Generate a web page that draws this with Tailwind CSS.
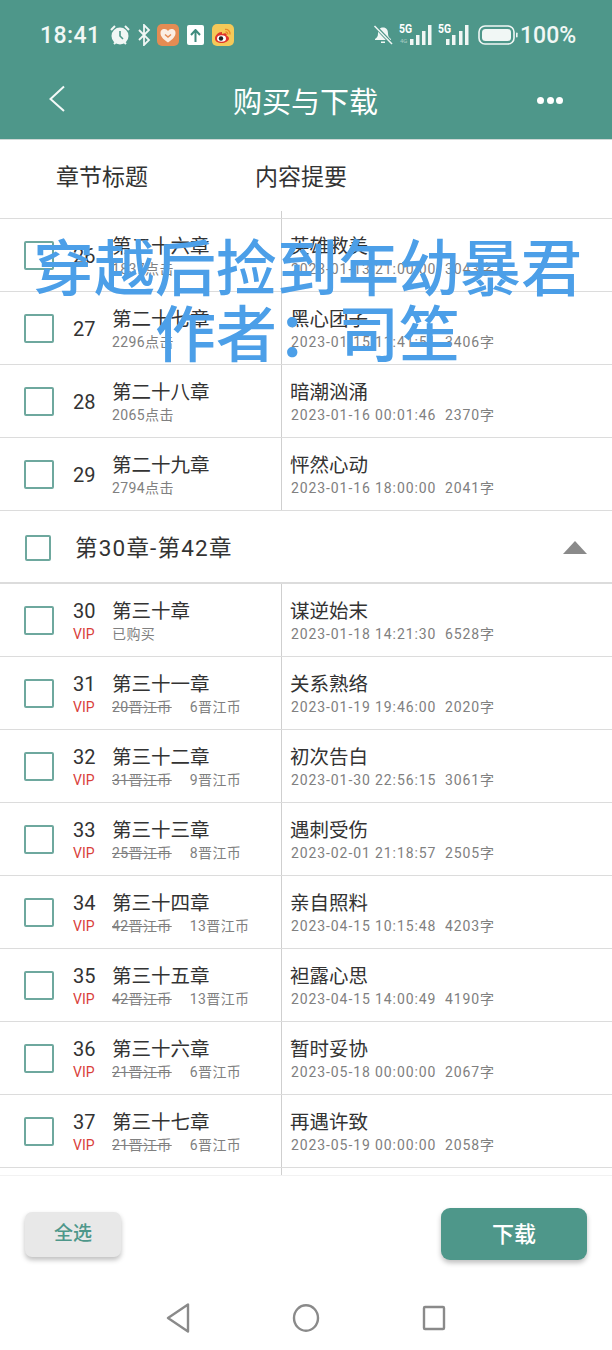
<!DOCTYPE html>
<html lang="zh-CN"><head><meta charset="utf-8"><script src="https://cdn.jsdelivr.net/npm/@tailwindcss/browser@4"></script></head>
<body class="bg-white">
<div class="relative w-[612px] h-[1350px] overflow-hidden bg-white flex flex-col font-['Roboto','Noto_Sans_CJK_SC',sans-serif] text-[#333]">

<header class="h-[140px] shrink-0 bg-[#4e978a] border-b border-[#cfd8d6] text-white flex flex-col">
  <div class="h-[70px] flex items-center justify-between pl-[40px] pr-[37px]">
    <div class="flex items-center">
      <span class="text-[23px] font-medium tracking-[0.4px] w-[69px] mt-[2px] text-[#f1f7f5]">18:41</span>
      <svg class="w-[22px] h-[22px]" viewBox="0 0 22 22"><circle cx="11" cy="12" r="8.5" fill="#f1f7f5"/><path d="M2 6l4-4M20 6l-4-4M5 20l2-2M17 20l-2-2" stroke="#f1f7f5" stroke-width="2" fill="none"/><path d="M11 7v5l3 3" stroke="#4e978a" stroke-width="1.6" fill="none"/></svg>
      <svg class="w-[14px] h-[22px] ml-[6px]" viewBox="0 0 14 22"><path d="M2 6l10 10-5 5V1l5 5L2 16" stroke="#f1f7f5" stroke-width="1.8" fill="none"/></svg>
      <div class="w-[22px] h-[22px] ml-[6px] rounded-[5px] bg-[#e58c53] flex items-center justify-center"><svg class="w-[16px] h-[15px]" viewBox="0 0 16 15"><path d="M8 14.5C3 11 .5 8.500 .5 5A4 4 0 0 1 8 3a4 4 0 0 1 7.500 2c0 3.500-2.500 6-7.500 9.500z" fill="#fbeee2"/><path d="M5 6.500l3 2.500 3-2.500" stroke="#e58c53" stroke-width="1.500" fill="none"/></svg></div>
      <div class="w-[17px] h-[20px] ml-[8px] rounded-[2px] bg-white flex items-center justify-center"><svg class="w-[11px] h-[13px]" viewBox="0 0 11 13"><path d="M5.500 13V2M1 6l4.500-5L10 6" stroke="#3f8b7e" stroke-width="2" fill="none"/></svg></div>
      <div class="w-[22px] h-[22px] ml-[8px] rounded-[5px] bg-[#f6c958] flex items-center justify-center"><svg class="w-[19px] h-[17px]" viewBox="0 0 19 17"><path d="M8 5C4 5 1 8.500 1 11.500 1 14.500 4 16 7.500 16s7.500-2 7.500-4.500c0-2-2-2.500-2.500-2.700.5-1.500 0-3-2.500-2.300-1 .3-1.500.5-2 .5z" fill="#e0352b"/><ellipse cx="7.500" cy="11.500" rx="4.500" ry="3.300" fill="#fff"/><circle cx="7" cy="11.500" r="2.200" fill="#222"/><path d="M11 2.500c3-.5 5.500 2 5 5M11.500 5c1.500-.2 2.500 1 2.300 2.500" stroke="#e8872a" stroke-width="1.300" fill="none"/></svg></div>
    </div>
    <div class="flex items-center">
      <svg class="w-[20px] h-[20px]" viewBox="0 0 20 20"><path d="M10 2.500c-3.500 0-5 2.500-5 6 0 3-1 4-3 5.500v1h16v-1c-2-1.500-3-2.500-3-5.500 0-3.500-1.500-6-5-6z" fill="#f1f7f5"/><path d="M8 16.500h4v1.500H8z" fill="#f1f7f5"/><path d="M2 1l17 18" stroke="#4e978a" stroke-width="3.500"/><path d="M1.500 1l17.500 18" stroke="#f1f7f5" stroke-width="1.500"/></svg>
      <div class="relative w-[34px] h-[22px] ml-[6px]">
        <span class="absolute left-0 top-[-2px] text-[13px] font-bold leading-[14px] scale-x-[0.8] origin-left">5G</span>
        <span class="absolute left-[1px] top-[13px] text-[6px] leading-[8px] text-white/50">4G</span>
        <svg class="absolute left-0 top-0 w-[34px] h-[22px]" viewBox="0 0 34 22"><path d="M11 15h3.500v6H11zM17 11h3.500v10H17zM23 7h3.500v14H23zM29 1h3.500v20H29z" fill="#f1f7f5"/></svg>
      </div>
      <div class="relative w-[32px] h-[22px] ml-[5px]">
        <span class="absolute left-0 top-[-2px] text-[13px] font-bold leading-[14px] scale-x-[0.8] origin-left">5G</span>
        <svg class="absolute left-0 top-0 w-[32px] h-[22px]" viewBox="0 0 32 22"><path d="M8 15h3.500v6H8zM14 11h3.500v10H14zM21 7h3.500v14H21zM27 1h3.500v20H27z" fill="#f1f7f5"/></svg>
      </div>
      <svg class="w-[40px] h-[20px] ml-[8px]" viewBox="0 0 40 20"><rect x="1" y="1" width="35" height="18" rx="6" fill="none" stroke="#f1f7f5" stroke-width="1.600"/><rect x="4" y="4" width="29" height="12" rx="3.500" fill="#f1f7f5"/><rect x="38" y="7.500" width="1.600" height="5" rx=".8" fill="#f1f7f5"/></svg>
      <span class="text-[23px] font-medium ml-[2px] w-[55px] mt-[2px] text-[#f1f7f5]">100%</span>
    </div>
  </div>
  <div class="relative flex-1 flex items-start justify-center">
    <svg class="absolute left-[48px] top-[15px] w-[18px] h-[27px]" viewBox="0 0 18 27"><path d="M16 1.500L2.500 14 16 26" stroke="#f4f9f8" stroke-width="2" fill="none"/></svg>
    <h1 class="text-[29px] font-normal leading-[40px] mt-[13px] -ml-[1px]">购买与下载</h1>
    <div class="absolute left-[537px] top-[27px] flex gap-[2.500px]"><i class="block w-[7px] h-[7px] rounded-full bg-white"></i><i class="block w-[7px] h-[7px] rounded-full bg-white"></i><i class="block w-[7px] h-[7px] rounded-full bg-white"></i></div>
  </div>
</header>

<nav class="h-[71px] shrink-0 flex items-start pt-[22px] pl-[56px] text-[23px] leading-[32px]">
  <span class="w-[199px]">章节标题</span><span>内容提要</span>
</nav>
<div class="h-[8px] shrink-0 border-b border-[#dcdcdc] pl-[281px]"><div class="h-full border-l border-[#cfcfcf]"></div></div>

<main class="flex-1 flex flex-col">

<div class="h-[73px] shrink-0 flex border-b border-[#dcdcdc]"><div class="w-[281px] flex"><div class="w-[30px] h-[29px] mt-[22px] ml-[24px] border-2 border-[#6ea89e] rounded-[2px]"></div><div class="w-[39px] ml-[19px] text-[20px] leading-[28px] mt-[23px]">26</div><div><p class="text-[19.500px] leading-[24px] mt-[16px]">第二十六章</p><p class="text-[14px] leading-[20px] tracking-[0.4px] text-[#808080]">1837点击</p></div></div><div class="border-l border-[#cfcfcf] pl-[9px] flex-1"><p class="text-[19.500px] leading-[24px] mt-[16px] -ml-[1px]">英雄救美</p><p class="text-[14px] leading-[20px] tracking-[0.9px] text-[#808080]">2023-01-13 21:00:00&nbsp; 3043字</p></div></div>

<div class="h-[73px] shrink-0 flex border-b border-[#dcdcdc]"><div class="w-[281px] flex"><div class="w-[30px] h-[29px] mt-[22px] ml-[24px] border-2 border-[#6ea89e] rounded-[2px]"></div><div class="w-[39px] ml-[19px] text-[20px] leading-[28px] mt-[23px]">27</div><div><p class="text-[19.500px] leading-[24px] mt-[16px]">第二十七章</p><p class="text-[14px] leading-[20px] tracking-[0.4px] text-[#808080]">2296点击</p></div></div><div class="border-l border-[#cfcfcf] pl-[9px] flex-1"><p class="text-[19.500px] leading-[24px] mt-[16px] -ml-[1px]">黑心团子</p><p class="text-[14px] leading-[20px] tracking-[0.9px] text-[#808080]">2023-01-15 11:41:51&nbsp; 3406字</p></div></div>

<div class="h-[73px] shrink-0 flex border-b border-[#dcdcdc]"><div class="w-[281px] flex"><div class="w-[30px] h-[29px] mt-[22px] ml-[24px] border-2 border-[#6ea89e] rounded-[2px]"></div><div class="w-[39px] ml-[19px] text-[20px] leading-[28px] mt-[23px]">28</div><div><p class="text-[19.500px] leading-[24px] mt-[16px]">第二十八章</p><p class="text-[14px] leading-[20px] tracking-[0.4px] text-[#808080]">2065点击</p></div></div><div class="border-l border-[#cfcfcf] pl-[9px] flex-1"><p class="text-[19.500px] leading-[24px] mt-[16px] -ml-[1px]">暗潮汹涌</p><p class="text-[14px] leading-[20px] tracking-[0.9px] text-[#808080]">2023-01-16 00:01:46&nbsp; 2370字</p></div></div>

<div class="h-[73px] shrink-0 flex border-b border-[#dcdcdc]"><div class="w-[281px] flex"><div class="w-[30px] h-[29px] mt-[22px] ml-[24px] border-2 border-[#6ea89e] rounded-[2px]"></div><div class="w-[39px] ml-[19px] text-[20px] leading-[28px] mt-[23px]">29</div><div><p class="text-[19.500px] leading-[24px] mt-[16px]">第二十九章</p><p class="text-[14px] leading-[20px] tracking-[0.4px] text-[#808080]">2794点击</p></div></div><div class="border-l border-[#cfcfcf] pl-[9px] flex-1"><p class="text-[19.500px] leading-[24px] mt-[16px] -ml-[1px]">怦然心动</p><p class="text-[14px] leading-[20px] tracking-[0.9px] text-[#808080]">2023-01-16 18:00:00&nbsp; 2041字</p></div></div>

<div class="h-[73px] shrink-0 flex items-center border-b-2 border-[#dcdcdc]"><div class="w-[26px] h-[26px] ml-[25px] mt-[2px] border-2 border-[#6ea89e] rounded-[2px]"></div><span class="ml-[24px] mt-[2px] text-[22.500px] tracking-[1.2px] leading-[30px]">第30章-第42章</span><svg class="w-[24px] h-[13px] ml-auto mr-[25px] mt-[1px]" viewBox="0 0 24 13"><path d="M12 0L24 13H0z" fill="#8a8a8a"/></svg></div>

<div class="h-[73px] shrink-0 flex border-b border-[#dcdcdc]"><div class="w-[281px] flex"><div class="w-[30px] h-[29px] mt-[22px] ml-[24px] border-2 border-[#6ea89e] rounded-[2px]"></div><div class="w-[39px] ml-[19px]"><p class="text-[20px] leading-[26px] mt-[14px]">30</p><p class="text-[14px] leading-[20px] text-[#d9403a]">VIP</p></div><div><p class="text-[19.500px] leading-[24px] mt-[16px]">第三十章</p><p class="text-[14px] leading-[20px] tracking-[0.4px] text-[#808080]">已购买</p></div></div><div class="border-l border-[#cfcfcf] pl-[9px] flex-1"><p class="text-[19.500px] leading-[24px] mt-[16px] -ml-[1px]">谋逆始末</p><p class="text-[14px] leading-[20px] tracking-[0.9px] text-[#808080]">2023-01-18 14:21:30&nbsp; 6528字</p></div></div>

<div class="h-[73px] shrink-0 flex border-b border-[#dcdcdc]"><div class="w-[281px] flex"><div class="w-[30px] h-[29px] mt-[22px] ml-[24px] border-2 border-[#6ea89e] rounded-[2px]"></div><div class="w-[39px] ml-[19px]"><p class="text-[20px] leading-[26px] mt-[14px]">31</p><p class="text-[14px] leading-[20px] text-[#d9403a]">VIP</p></div><div><p class="text-[19.500px] leading-[24px] mt-[16px]">第三十一章</p><p class="text-[14px] leading-[20px] tracking-[0.4px] text-[#808080]"><s class="mr-[18px]">20晋江币</s>6晋江币</p></div></div><div class="border-l border-[#cfcfcf] pl-[9px] flex-1"><p class="text-[19.500px] leading-[24px] mt-[16px] -ml-[1px]">关系熟络</p><p class="text-[14px] leading-[20px] tracking-[0.9px] text-[#808080]">2023-01-19 19:46:00&nbsp; 2020字</p></div></div>

<div class="h-[73px] shrink-0 flex border-b border-[#dcdcdc]"><div class="w-[281px] flex"><div class="w-[30px] h-[29px] mt-[22px] ml-[24px] border-2 border-[#6ea89e] rounded-[2px]"></div><div class="w-[39px] ml-[19px]"><p class="text-[20px] leading-[26px] mt-[14px]">32</p><p class="text-[14px] leading-[20px] text-[#d9403a]">VIP</p></div><div><p class="text-[19.500px] leading-[24px] mt-[16px]">第三十二章</p><p class="text-[14px] leading-[20px] tracking-[0.4px] text-[#808080]"><s class="mr-[18px]">31晋江币</s>9晋江币</p></div></div><div class="border-l border-[#cfcfcf] pl-[9px] flex-1"><p class="text-[19.500px] leading-[24px] mt-[16px] -ml-[1px]">初次告白</p><p class="text-[14px] leading-[20px] tracking-[0.9px] text-[#808080]">2023-01-30 22:56:15&nbsp; 3061字</p></div></div>

<div class="h-[73px] shrink-0 flex border-b border-[#dcdcdc]"><div class="w-[281px] flex"><div class="w-[30px] h-[29px] mt-[22px] ml-[24px] border-2 border-[#6ea89e] rounded-[2px]"></div><div class="w-[39px] ml-[19px]"><p class="text-[20px] leading-[26px] mt-[14px]">33</p><p class="text-[14px] leading-[20px] text-[#d9403a]">VIP</p></div><div><p class="text-[19.500px] leading-[24px] mt-[16px]">第三十三章</p><p class="text-[14px] leading-[20px] tracking-[0.4px] text-[#808080]"><s class="mr-[18px]">25晋江币</s>8晋江币</p></div></div><div class="border-l border-[#cfcfcf] pl-[9px] flex-1"><p class="text-[19.500px] leading-[24px] mt-[16px] -ml-[1px]">遇刺受伤</p><p class="text-[14px] leading-[20px] tracking-[0.9px] text-[#808080]">2023-02-01 21:18:57&nbsp; 2505字</p></div></div>

<div class="h-[73px] shrink-0 flex border-b border-[#dcdcdc]"><div class="w-[281px] flex"><div class="w-[30px] h-[29px] mt-[22px] ml-[24px] border-2 border-[#6ea89e] rounded-[2px]"></div><div class="w-[39px] ml-[19px]"><p class="text-[20px] leading-[26px] mt-[14px]">34</p><p class="text-[14px] leading-[20px] text-[#d9403a]">VIP</p></div><div><p class="text-[19.500px] leading-[24px] mt-[16px]">第三十四章</p><p class="text-[14px] leading-[20px] tracking-[0.4px] text-[#808080]"><s class="mr-[18px]">42晋江币</s>13晋江币</p></div></div><div class="border-l border-[#cfcfcf] pl-[9px] flex-1"><p class="text-[19.500px] leading-[24px] mt-[16px] -ml-[1px]">亲自照料</p><p class="text-[14px] leading-[20px] tracking-[0.9px] text-[#808080]">2023-04-15 10:15:48&nbsp; 4203字</p></div></div>

<div class="h-[73px] shrink-0 flex border-b border-[#dcdcdc]"><div class="w-[281px] flex"><div class="w-[30px] h-[29px] mt-[22px] ml-[24px] border-2 border-[#6ea89e] rounded-[2px]"></div><div class="w-[39px] ml-[19px]"><p class="text-[20px] leading-[26px] mt-[14px]">35</p><p class="text-[14px] leading-[20px] text-[#d9403a]">VIP</p></div><div><p class="text-[19.500px] leading-[24px] mt-[16px]">第三十五章</p><p class="text-[14px] leading-[20px] tracking-[0.4px] text-[#808080]"><s class="mr-[18px]">42晋江币</s>13晋江币</p></div></div><div class="border-l border-[#cfcfcf] pl-[9px] flex-1"><p class="text-[19.500px] leading-[24px] mt-[16px] -ml-[1px]">袒露心思</p><p class="text-[14px] leading-[20px] tracking-[0.9px] text-[#808080]">2023-04-15 14:00:49&nbsp; 4190字</p></div></div>

<div class="h-[73px] shrink-0 flex border-b border-[#dcdcdc]"><div class="w-[281px] flex"><div class="w-[30px] h-[29px] mt-[22px] ml-[24px] border-2 border-[#6ea89e] rounded-[2px]"></div><div class="w-[39px] ml-[19px]"><p class="text-[20px] leading-[26px] mt-[14px]">36</p><p class="text-[14px] leading-[20px] text-[#d9403a]">VIP</p></div><div><p class="text-[19.500px] leading-[24px] mt-[16px]">第三十六章</p><p class="text-[14px] leading-[20px] tracking-[0.4px] text-[#808080]"><s class="mr-[18px]">21晋江币</s>6晋江币</p></div></div><div class="border-l border-[#cfcfcf] pl-[9px] flex-1"><p class="text-[19.500px] leading-[24px] mt-[16px] -ml-[1px]">暂时妥协</p><p class="text-[14px] leading-[20px] tracking-[0.9px] text-[#808080]">2023-05-18 00:00:00&nbsp; 2067字</p></div></div>

<div class="h-[73px] shrink-0 flex border-b border-[#dcdcdc]"><div class="w-[281px] flex"><div class="w-[30px] h-[29px] mt-[22px] ml-[24px] border-2 border-[#6ea89e] rounded-[2px]"></div><div class="w-[39px] ml-[19px]"><p class="text-[20px] leading-[26px] mt-[14px]">37</p><p class="text-[14px] leading-[20px] text-[#d9403a]">VIP</p></div><div><p class="text-[19.500px] leading-[24px] mt-[16px]">第三十七章</p><p class="text-[14px] leading-[20px] tracking-[0.4px] text-[#808080]"><s class="mr-[18px]">21晋江币</s>6晋江币</p></div></div><div class="border-l border-[#cfcfcf] pl-[9px] flex-1"><p class="text-[19.500px] leading-[24px] mt-[16px] -ml-[1px]">再遇许致</p><p class="text-[14px] leading-[20px] tracking-[0.9px] text-[#808080]">2023-05-19 00:00:00&nbsp; 2058字</p></div></div>

<div class="h-[8px] shrink-0 border-b border-[#f2f2f2] pl-[281px]"><div class="h-full border-l border-[#cfcfcf]"></div></div>

<div class="flex items-start justify-between pl-[25px] pr-[25px] mt-[32px]">
  <button class="w-[96px] h-[45px] mt-[4px] rounded-[7px] bg-[#e8e8e8] text-[#4e978a] text-[19px] font-medium shadow-[0_3px_5px_rgba(0,0,0,0.25)]">全选</button>
  <button class="w-[146px] h-[52px] rounded-[9px] bg-[#4e978a] text-white text-[22px] font-medium shadow-[0_3px_5px_rgba(0,0,0,0.25)]">下载</button>
</div>

<div class="flex items-center justify-center mt-[43px] pl-[2px]">
  <svg class="w-[24px] h-[30px] -ml-[2px]" viewBox="0 0 24 30"><path d="M22 1.500V28.500L2 15z" fill="none" stroke="#8a8a8a" stroke-width="2.400" stroke-linejoin="round"/></svg>
  <svg class="w-[28px] h-[30px] ml-[102px]" viewBox="0 0 28 30"><ellipse cx="14" cy="15" rx="12" ry="12.800" fill="none" stroke="#8a8a8a" stroke-width="2.400"/></svg>
  <svg class="w-[24px] h-[26px] ml-[102px]" viewBox="0 0 24 26"><rect x="2" y="2" width="20" height="22" rx="1" fill="none" stroke="#8a8a8a" stroke-width="2.400"/></svg>
</div>
</main>

<div class="absolute left-[3px] right-0 top-[232px] text-center text-[61px] font-medium leading-[66px] text-[#4c9fe8] whitespace-nowrap font-['Noto_Sans_CJK_SC',sans-serif]"><p>穿越后捡到年幼暴君</p><p>作者：司笙</p></div>
</div>
</body></html>
